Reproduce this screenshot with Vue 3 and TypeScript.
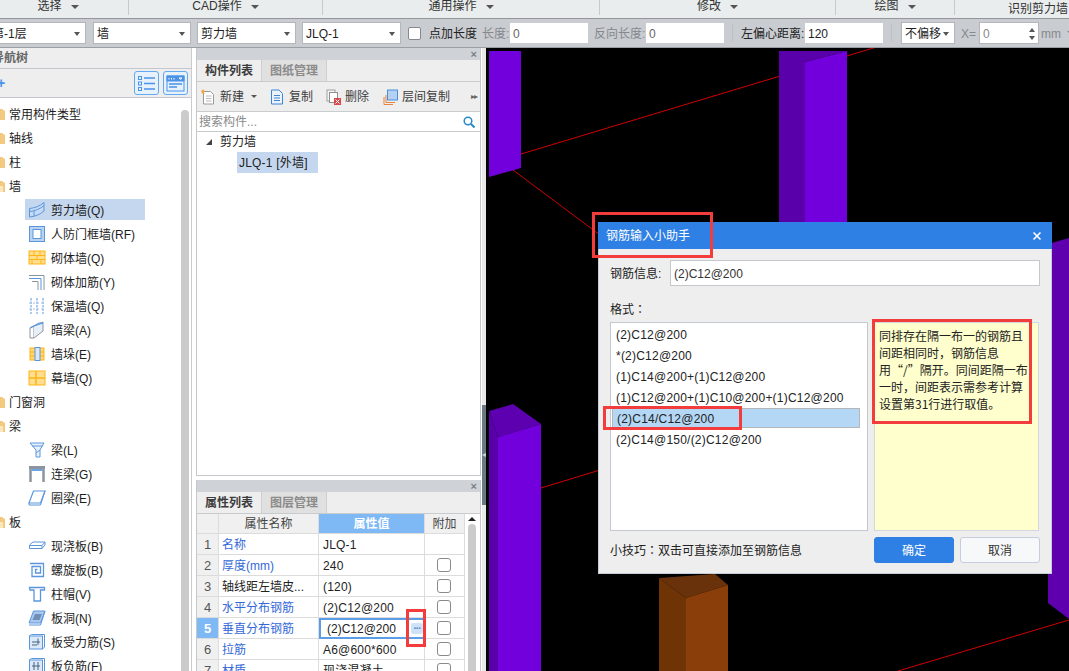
<template>
  <div class="app">
    <div class="ribbon">
      <div v-for="s in ribbon" :key="s.label" class="rib-sec" :class="s.cls">
        <span>{{ s.label }}</span><i class="caret"></i>
      </div>
      <div class="rib-last">识别剪力墙</div>
    </div>

    <div class="toolbar">
      <div class="sel first"><span>第-1层</span><i class="caret"></i></div>
      <div class="sel w98"><span>墙</span><i class="caret"></i></div>
      <div class="sel w99"><span>剪力墙</span><i class="caret"></i></div>
      <div class="sel w99"><span>JLQ-1</span><i class="caret"></i></div>
      <span class="tb-check"></span>
      <span class="tb-label l-point">点加长度</span>
      <span class="tb-label off l-len">长度:</span>
      <input class="tb-input" value="0" readonly />
      <span class="tb-label off l-back">反向长度:</span>
      <input class="tb-input" value="0" readonly />
      <i class="tb-sep"></i>
      <span class="tb-label l-offset">左偏心距离:</span>
      <input class="tb-input" value="120" readonly />
      <i class="tb-sep"></i>
      <div class="sel w54"><span>不偏移</span><i class="caret"></i></div>
      <span class="tb-label off l-x">X=</span>
      <div class="spin">
        <span>0</span>
        <div class="spin-btns"><i class="up"></i><i class="down"></i></div>
      </div>
      <span class="tb-label off l-mm">mm</span>
      <i class="caret tb-tail"></i>
    </div>

    <div class="main">
      <aside class="nav">
        <div class="nav-head"><span>导航树</span></div>
        <div class="nav-tools">
          <span class="plus">+</span>
          <button class="view-btn">
            <svg width="19" height="17" viewBox="0 0 19 17" fill="none" stroke="#4a93e6">
              <rect x="1.5" y="1.5" width="3" height="3" /><rect x="1.5" y="7" width="3" height="3" /><rect x="1.5" y="12.5" width="3" height="3" />
              <path d="M7 3h11M7 8.5h11M7 14h11" stroke-width="1.3" />
            </svg>
          </button>
          <button class="view-btn">
            <svg width="19" height="17" viewBox="0 0 19 17" fill="none" stroke="#4a93e6">
              <rect x="1" y="1" width="17" height="15" />
              <path d="M1 1h17v5H1z" fill="#4a93e6" />
              <path d="M3 3v1.5M5.5 3v1.5M8 3v1.5M13 3h3l-1.500 1.500z" stroke="#fff" />
              <path d="M3 9h13M3 12h8" stroke-width="1.300" />
            </svg>
          </button>
        </div>
        <div class="nav-body">
          <ul class="tree">
            <li v-for="n in navTree" :key="n.label" class="tree-row" :class="{ item: n.icon, active: n.active }">
              <svg v-if="n.icon" class="tree-ico" viewBox="0 0 18 18" fill="none" v-html="icons[n.icon]"></svg>
              <svg v-else class="folder" viewBox="0 0 5 12">
                <path d="M0 1h2.500l1 1.500H5V12H0z" fill="#f2c97e" />
                <path v-if="n.open" d="M0 6h3v6H0z" fill="#fbe7bd" />
              </svg>
              <span>{{ n.label }}</span>
            </li>
          </ul>
          <div class="nav-scroll"><i></i></div>
        </div>
      </aside>

      <div class="mid">
        <section class="panel top-panel">
          <div class="panel-bar"><span>×</span></div>
          <div class="tabs">
            <span class="tab on">构件列表</span>
            <span class="tab">图纸管理</span>
          </div>
          <div class="actions">
            <span class="act act-new">
              <svg width="15" height="16" viewBox="0 0 15 16" fill="none">
                <path d="M3.500 2.500h7l3 3v9.500h-10z" fill="#fff" stroke="#9a9a9a" />
                <path d="M6 7h5.500M6 9.500h5.500M6 12h5.500" stroke="#b8b8b8" />
                <path d="M3 0l.8 1.600L5.500 2 4 3.300l.5 1.700L3 4l-1.500 1 .5-1.700L.5 2l1.700-.4z" fill="#f2a33a" />
              </svg>
              新建
            </span>
            <i class="caret act-caret"></i>
            <span class="act act-copy">
              <svg width="14" height="16" viewBox="0 0 14 16" fill="none" stroke="#3f86d0">
                <path d="M1.500 1h7.500l3.500 3.500V15h-11z" fill="#eaf3fb" />
                <path d="M4 6.500h6M4 9h6M4 11.500h6" />
              </svg>
              复制
            </span>
            <span class="act act-del">
              <svg width="16" height="16" viewBox="0 0 16 16" fill="none">
                <rect x="1" y="1" width="8" height="11" stroke="#a0a0a0" fill="#f5f5f5" />
                <rect x="3.500" y="3.500" width="8" height="10" stroke="#909090" fill="#fff" />
                <rect x="8" y="9" width="7" height="7" fill="#d8484a" />
                <path d="M9.500 10.500l4 4M13.500 10.500l-4 4" stroke="#fff" />
              </svg>
              删除
            </span>
            <span class="act act-floor">
              <svg width="15" height="16" viewBox="0 0 15 16" fill="none">
                <path d="M3 6v7.500h9" stroke="#e8833a" />
                <path d="M1 8v7.500h9" stroke="#e8833a" />
                <rect x="4.500" y="1" width="10" height="10" fill="#b4d0f2" stroke="#4a8fdc" />
              </svg>
              层间复制
            </span>
            <span class="more">▸▸</span>
          </div>
          <div class="search">
            <span>搜索构件...</span>
            <svg width="12" height="12" viewBox="0 0 12 12" fill="none" stroke="#2a8ac8" stroke-width="1.500">
              <circle cx="5" cy="5" r="3.800" /><path d="M8 8l3.500 3.500" stroke-width="2" />
            </svg>
          </div>
          <div class="comp-tree">
            <div class="comp-root"><i class="tri"></i>剪力墙</div>
            <div class="comp-leaf">JLQ-1 [外墙]</div>
          </div>
        </section>

        <section class="panel bottom-panel">
          <div class="panel-bar low"><span>×</span></div>
          <div class="tabs">
            <span class="tab on">属性列表</span>
            <span class="tab">图层管理</span>
          </div>
          <div class="prop-wrap">
            <div class="prop-grid">
              <div class="ph"></div>
              <div class="ph">属性名称</div>
              <div class="ph hot">属性值</div>
              <div class="ph">附加</div>
              <template v-for="(r, i) in props" :key="r.name">
                <div class="pc num" :class="{ cur: r.current }">{{ i + 1 }}</div>
                <div class="pc name" :class="{ blue: r.blue }">{{ r.name }}</div>
                <div class="pc val" :class="{ editing: r.current }">
                  <span>{{ r.value }}</span>
                  <b v-if="r.current" class="dots">···</b>
                </div>
                <div class="pc chk"><i v-if="r.check"></i></div>
              </template>
            </div>
            <div class="prop-scroll"><em></em><i></i></div>
            <div class="mark mark-dots"></div>
          </div>
        </section>
      </div>

      <div class="split"><i>◂</i></div>

      <div class="canvas">
        <svg class="scene" viewBox="486 48 583 623" width="583" height="623">
          <g stroke="#d00000" stroke-width="1" fill="none">
            <path d="M521 154L890 43" />
            <path d="M513 170L600 235" />
            <path d="M541 488L600 470" />
            <path d="M898 671L1069 620" />
          </g>
          <path d="M489 51h32v117l-32 9z" fill="#7200dd" />
          <path d="M779 51h26v180h-26z" fill="#5a00ab" />
          <path d="M805 62L847 51v180h-42z" fill="#7200dd" />
          <path d="M805 51h42l-42 11z" fill="#5a00ab" />
          <path d="M489 411l24-7 28 20-43 13z" fill="#5d00b0" />
          <path d="M489 411l9 26v234h-9z" fill="#5a00ab" />
          <path d="M498 437l43-13v247h-43z" fill="#7200dd" />
          <path d="M659 578l56-4 13 11-42 13z" fill="#69320a" />
          <path d="M659 578l27 20v73h-27z" fill="#6f3406" />
          <path d="M686 598l42-13v86h-42z" fill="#8a3f0a" />
          <path d="M1048 244l21-6v381l-21-16z" fill="#5f00af" />
        </svg>

        <div class="dialog">
          <div class="dlg-title">
            <span>钢筋输入小助手</span>
            <svg width="10" height="10" viewBox="0 0 10 10" stroke="#fff" stroke-width="1.600">
              <path d="M1.500 1.500l7 7M8.500 1.500l-7 7" />
            </svg>
          </div>
          <div class="dlg-body">
            <div class="info-row">
              <label>钢筋信息:</label>
              <input value="(2)C12@200" readonly />
            </div>
            <div class="fmt-label">格式<span class="tc">：</span></div>
            <div class="fmt-row">
              <ul class="fmt-list">
                <li v-for="f in formats" :key="f" :class="{ sel: f === selectedFormat }">{{ f }}</li>
              </ul>
              <div class="fmt-help">
                <span v-for="l in helpLines" :key="l">{{ l }}</span>
              </div>
            </div>
            <div class="dlg-foot">
              <span>小技巧<span class="tc">：</span>双击可直接添加至钢筋信息</span>
              <div class="btns">
                <button class="ok">确定</button>
                <button class="cancel">取消</button>
              </div>
            </div>
          </div>
          <div class="mark mark-title"></div>
          <div class="mark mark-sel"></div>
          <div class="mark mark-help"></div>
        </div>
      </div>
    </div>
  </div>
</template>

<script setup lang="ts">
interface RibbonSection {
  label: string
  cls: string
}

interface NavNode {
  label: string
  icon?: string
  open?: boolean
  active?: boolean
}

interface PropRow {
  name: string
  value: string
  blue: boolean
  check: boolean
  current?: boolean
}

const ribbon: RibbonSection[] = [
  { label: '选择', cls: 'r1' },
  { label: 'CAD操作', cls: 'r2' },
  { label: '通用操作', cls: 'r3' },
  { label: '修改', cls: 'r4' },
  { label: '绘图', cls: 'r5' }
]

const navTree: NavNode[] = [
  { label: '常用构件类型' },
  { label: '轴线' },
  { label: '柱' },
  { label: '墙', open: true },
  { label: '剪力墙(Q)', icon: 'wall', active: true },
  { label: '人防门框墙(RF)', icon: 'door' },
  { label: '砌体墙(Q)', icon: 'brick' },
  { label: '砌体加筋(Y)', icon: 'rebar' },
  { label: '保温墙(Q)', icon: 'insul' },
  { label: '暗梁(A)', icon: 'hidden' },
  { label: '墙垛(E)', icon: 'pier' },
  { label: '幕墙(Q)', icon: 'curtain' },
  { label: '门窗洞' },
  { label: '梁', open: true },
  { label: '梁(L)', icon: 'beam' },
  { label: '连梁(G)', icon: 'link' },
  { label: '圈梁(E)', icon: 'ring' },
  { label: '板', open: true },
  { label: '现浇板(B)', icon: 'slab' },
  { label: '螺旋板(B)', icon: 'spiral' },
  { label: '柱帽(V)', icon: 'cap' },
  { label: '板洞(N)', icon: 'hole' },
  { label: '板受力筋(S)', icon: 'bar1' },
  { label: '板负筋(F)', icon: 'bar2' }
]

const B = 'stroke="#5b96dc"'
const O = 'stroke="#fdb515"'

const icons: Record<string, string> = {
  wall: `<path d="M1.500 7.500C7 7 12 5 16 1.500V10c-4 3.500-9 5.500-14.500 6z" fill="#c5dbf5" ${B}/><path d="M1.500 10.500C7 10 12 8 16 4.500M6 10v5.500" ${B}/>`,
  door: `<rect x="1.500" y="1.500" width="15" height="15" fill="#b9d2f0" ${B}/><rect x="5" y="4.500" width="8" height="9" fill="#fff" ${B}/>`,
  brick: `<rect x="1" y="2" width="16" height="13" fill="#ffdf8f" ${O}/><path d="M1 6.500h16M1 10.500h16M6 2v4.500M12 2v4.500M9 6.500v4M4 10.500v4.500M13 10.500v4.500" ${O}/>`,
  rebar: `<path d="M1 2.500h15V17" stroke="#8c959e"/><path d="M1 5.500h12V17" stroke="#5b96dc"/><path d="M4 8.500h6V17" stroke="#8c959e"/>`,
  insul: `<path d="M3 1v16M9 1v16M15 1v16" stroke="#5b96dc" stroke-dasharray="2.500 1"/><path d="M1 6h16M1 12h16" stroke="#a8c4e8" stroke-dasharray="2 2"/>`,
  hidden: `<path d="M2 7l4-2v12H2z" fill="#fff" stroke="#8c959e"/><path d="M6 5l9-4v9l-9 7" fill="#e6eef8" stroke="#8c959e"/><path d="M2 7l9-5h4L6 5z" fill="#b9d2f0" ${B}/>`,
  pier: `<rect x="2" y="3" width="14" height="12" fill="#ffd777" ${O}/><path d="M2 7h14M2 11h14" ${O}/><rect x="7" y="2.500" width="5" height="13" fill="#dbe8f8" ${B}/>`,
  curtain: `<rect x="1" y="2" width="16" height="14" fill="#ffdf8f" ${O}/><path d="M1 9h16M8 2v14" ${O} stroke-width="1.500"/>`,
  beam: `<path d="M2 2h14l-4 7v7H8V9z" fill="#e9f1fb" ${B}/><path d="M4 5h10M8 12l4-3" ${B}/>`,
  link: `<path d="M2.500 17V4M15.500 17V4" stroke="#8c959e" stroke-width="2.500"/><rect x="1.500" y="1.500" width="15" height="2" fill="#8c959e" stroke="#8c959e"/><rect x="3.500" y="4" width="11" height="2" fill="#6ea2e2"/>`,
  ring: `<path d="M5.500 2H17l-4.500 12H1z" fill="#fff" ${B} stroke-width="1.200"/><path d="M1 16h11.500l4.500-14M1 14v2" ${B}/>`,
  slab: `<path d="M1.500 8L5 5h12v3l-3 3.500H1.500z" fill="#fff" ${B}/><path d="M1.500 8.500H14l3-3.500M14 8.500v3" ${B}/>`,
  spiral: `<path d="M2 2.500h13.500V15.500H4V5.500h8.500V12H7.500V8.500h2" ${B} stroke-width="1.300"/>`,
  cap: `<path d="M1.500 2.500h15v2.500h-4v11H6V5H2z" fill="#fff" ${B} stroke-width="1.300"/>`,
  hole: `<path d="M5.500 2H17l-4.500 12H1z" fill="#aac8ee" ${B}/><path d="M7 5h7l-2.500 6h-7z" fill="#6f8fb8"/><path d="M1 16h11.500l4.500-14" ${B}/>`,
  bar1: `<rect x="1.500" y="3" width="13" height="13" fill="#dce9f9" ${B}/><path d="M1.500 3l2-1.500h13v12.500l-2 2" ${B}/><path d="M4 9h8M10 5.500V12M4 12h5" stroke="#46627f"/>`,
  bar2: `<rect x="1.500" y="3" width="13" height="13" fill="#dce9f9" ${B}/><path d="M1.500 3l2-1.500h13v12.500l-2 2" ${B}/><path d="M6 5v8M10 5v8M4 9h8" stroke="#46627f"/>`
}

const props: PropRow[] = [
  { name: '名称', value: 'JLQ-1', blue: true, check: false },
  { name: '厚度(mm)', value: '240', blue: true, check: true },
  { name: '轴线距左墙皮...', value: '(120)', blue: false, check: true },
  { name: '水平分布钢筋', value: '(2)C12@200', blue: true, check: true },
  { name: '垂直分布钢筋', value: '(2)C12@200', blue: true, check: true, current: true },
  { name: '拉筋', value: 'A6@600*600', blue: true, check: true },
  { name: '材质', value: '现浇混凝土', blue: true, check: true }
]

const formats: string[] = [
  '(2)C12@200',
  '*(2)C12@200',
  '(1)C14@200+(1)C12@200',
  '(1)C12@200+(1)C10@200+(1)C12@200',
  '(2)C14/C12@200',
  '(2)C14@150/(2)C12@200'
]
const selectedFormat = '(2)C14/C12@200'

const helpLines: string[] = [
  '同排存在隔一布一的钢筋且',
  '间距相同时，钢筋信息',
  '用“/”隔开。同间距隔一布',
  '一时，间距表示需参考计算',
  '设置第31行进行取值。'
]
</script>

<style>
html,
body {
  margin: 0;
  overflow: hidden;
}
</style>

<style scoped>
.app {
  width: 1069px;
  height: 671px;
  overflow: hidden;
  display: flex;
  flex-direction: column;
  background: #fff;
  color: #222;
  font: 12px/16px "Liberation Sans", "Noto Sans CJK SC", sans-serif;
}

.caret {
  display: inline-block;
  width: 0;
  height: 0;
  border-left: 4px solid transparent;
  border-right: 4px solid transparent;
  border-top: 4px solid #555;
}

.tc {
  font-family: "Noto Sans CJK TC", sans-serif;
}

/* ribbon */
.ribbon {
  height: 18px;
  flex: none;
  display: flex;
  margin-left: -12px;
  background: #e9eded;
  border-bottom: 1px solid #93979b;
}
.rib-sec {
  height: 15px;
  flex: none;
  box-sizing: border-box;
  display: flex;
  justify-content: center;
  gap: 9px;
  border-right: 1px solid #c6cbcb;
  overflow: hidden;
  color: #333;
}
.rib-sec span {
  margin-top: -2px;
}
.rib-sec .caret {
  margin-top: 5px;
}
.r1 { width: 141px; }
.r2 { width: 194px; }
.r3 { width: 277px; }
.r4 { width: 236px; }
.r5 { width: 119px; }
.rib-last {
  flex: none;
  margin-left: 53px;
  padding-top: 1px;
  white-space: nowrap;
  color: #333;
}

/* toolbar */
.toolbar {
  height: 28px;
  flex: none;
  display: flex;
  align-items: center;
  background: #c9ccd1;
  border-bottom: 1px solid #9b9ea3;
  white-space: nowrap;
}
.toolbar > * {
  flex: none;
}
.sel {
  height: 22px;
  box-sizing: border-box;
  display: flex;
  align-items: center;
  justify-content: space-between;
  padding: 1px 3px 0;
  background: #fff;
  border: 1px solid #b4b6ba;
  margin-right: 6px;
  color: #222;
}
.sel .caret {
  margin-right: 2px;
  border-left-width: 3px;
  border-right-width: 3px;
}
.first {
  width: 98px;
  margin-left: -12px;
  margin-right: 7px;
}
.w98 { width: 98px; }
.w99 { width: 99px; }
.w54 {
  width: 54px;
  margin: 0 0 0 1px;
}
.tb-check {
  width: 13px;
  height: 13px;
  box-sizing: border-box;
  margin-left: 1px;
  border: 1px solid #85888c;
  border-radius: 2px;
  background: #fff;
}
.tb-label {
  padding-top: 1px;
  color: #222;
}
.off {
  color: #85888c;
}
.l-point { margin-left: 8px; width: 48px; }
.l-len { margin-left: 5px; width: 28px; }
.l-back { margin-left: 6px; width: 52px; }
.l-offset { width: 64px; }
.l-x { margin-left: 6px; width: 18px; }
.l-mm { margin-left: 2px; }
.tb-tail {
  margin-left: 6px;
  border-top-color: #85888c;
}
.tb-input {
  width: 78px;
  height: 20px;
  box-sizing: border-box;
  padding: 1px 3px 0;
  border: none;
  outline: none;
  background: #fff;
  color: #222;
  font: inherit;
}
.off + .tb-input {
  color: #666;
}
.tb-sep {
  width: 1px;
  height: 18px;
  margin: 0 8px;
  background: #bcbfc4;
}
.spin {
  width: 60px;
  height: 22px;
  box-sizing: border-box;
  display: flex;
  align-items: center;
  justify-content: space-between;
  padding: 1px 3px 0;
  background: #fff;
  border: 1px solid #b4b6ba;
  color: #888;
}
.spin-btns {
  display: flex;
  flex-direction: column;
  gap: 4px;
}
.spin-btns i {
  width: 0;
  height: 0;
  border-left: 3px solid transparent;
  border-right: 3px solid transparent;
}
.spin-btns .up {
  border-bottom: 4px solid #555;
}
.spin-btns .down {
  border-top: 4px solid #555;
}

/* layout */
.main {
  flex: 1;
  min-height: 0;
  display: flex;
}

/* nav */
.nav {
  width: 191px;
  flex: none;
  display: flex;
  flex-direction: column;
  border-right: 1px solid #c8cbcf;
  overflow: hidden;
}
.nav-head {
  height: 20px;
  flex: none;
  background: #eeeeee;
  border-bottom: 1px solid #c4c8cd;
  color: #666;
  font-weight: 700;
  line-height: 21px;
}
.nav-head span {
  margin-left: -8px;
  display: block;
}
.nav-tools {
  height: 28px;
  flex: none;
  display: flex;
  align-items: center;
  gap: 4px;
  padding-right: 3px;
  background: #eeeeee;
  border-bottom: 1px solid #c4c8cd;
}
.plus {
  margin-left: -3px;
  margin-right: auto;
  color: #4a93e6;
  font-size: 14px;
  font-weight: 700;
}
.view-btn {
  width: 25px;
  height: 24px;
  box-sizing: border-box;
  padding: 0;
  display: flex;
  align-items: center;
  justify-content: center;
  background: #e6f1fc;
  border: 1px solid #62a9f0;
  border-radius: 3px;
}
.nav-body {
  flex: 1;
  min-height: 0;
  display: flex;
  background: #fff;
}
.tree {
  flex: 1;
  min-width: 0;
  margin: 0;
  padding: 2px 0 0;
  list-style: none;
  overflow: hidden;
}
.tree-row {
  height: 21px;
  margin-top: 3px;
  display: flex;
  align-items: center;
  gap: 4px;
  color: #1c1c1c;
  white-space: nowrap;
}
.tree-row span {
  padding-top: 2px;
}
.tree-row.item {
  margin-left: 25px;
  padding-left: 3px;
  width: 117px;
  gap: 5px;
}
.tree-row.active {
  background: #c5d7ee;
}
.folder {
  width: 5px;
  height: 12px;
  flex: none;
}
.tree-ico {
  width: 18px;
  height: 18px;
  flex: none;
}
.nav-scroll {
  width: 8px;
  flex: none;
  margin: 0 2px 0 0;
  padding-top: 12px;
  display: flex;
}
.nav-scroll i {
  flex: 1;
  background: #cbcbcb;
  border-radius: 4px 4px 0 0;
}

/* middle panels */
.mid {
  width: 285px;
  flex: none;
  margin-left: 4px;
  display: flex;
  flex-direction: column;
  gap: 4px;
}
.panel {
  display: flex;
  flex-direction: column;
  overflow: hidden;
  border-left: 1px solid #c4c8cd;
  border-right: 1px solid #c4c8cd;
}
.top-panel {
  height: 428px;
  flex: none;
  border-bottom: 1px solid #c4c8cd;
  box-sizing: border-box;
}
.bottom-panel {
  flex: 1;
  min-height: 0;
}
.panel-bar {
  height: 12px;
  flex: none;
  display: flex;
  justify-content: flex-end;
  padding-right: 3px;
  background: #cfd2d6;
  color: #7b7f84;
  font-size: 11px;
  font-weight: 700;
  line-height: 12px;
}
.tabs {
  height: 21px;
  flex: none;
  display: flex;
  background: #eeeeee;
  border-bottom: 1px solid #c9cccf;
}
.tab {
  width: 64px;
  text-align: center;
  line-height: 23px;
  background: #e0e0e0;
  color: #8b8b8b;
  font-weight: 700;
  border-right: 1px solid #cfcfcf;
}
.tab.on {
  background: #eeeeee;
  color: #3c3c3c;
}
.actions {
  height: 29px;
  flex: none;
  display: flex;
  align-items: center;
  background: #eeeeee;
  border-bottom: 1px solid #c9cccf;
  color: #3c3c3c;
  white-space: nowrap;
}
.act {
  display: flex;
  align-items: center;
  gap: 5px;
}
.act-new { margin-left: 3px; }
.act-caret {
  margin-left: 7px;
  border-left-width: 3px;
  border-right-width: 3px;
  border-top-width: 3px;
}
.act-copy { margin-left: 13px; }
.act-del { margin-left: 13px; gap: 3px; }
.act-floor { margin-left: 14px; gap: 4px; }
.more {
  margin-left: auto;
  margin-right: 3px;
  color: #666;
  font-size: 8px;
  letter-spacing: -1px;
}
.search {
  height: 18px;
  flex: none;
  display: flex;
  align-items: center;
  justify-content: space-between;
  padding: 1px 5px 0 2px;
  box-sizing: content-box;
  background: #fff;
  border-bottom: 1px solid #c9cccf;
  color: #8a8a8a;
}
.comp-tree {
  flex: 1;
  background: #fff;
  color: #222;
}
.comp-root {
  height: 20px;
  display: flex;
  align-items: center;
  padding-left: 9px;
  gap: 8px;
}
.tri {
  width: 0;
  height: 0;
  border-left: 6px solid transparent;
  border-bottom: 6px solid #444;
}
.comp-leaf {
  width: 81px;
  height: 21px;
  box-sizing: border-box;
  margin-left: 40px;
  padding-left: 2px;
  line-height: 22px;
  letter-spacing: 0.2px;
  background: #c5d7ee;
  white-space: nowrap;
}

/* property table */
.prop-wrap {
  position: relative;
  flex: 1;
  min-height: 0;
  display: flex;
  background: #fff;
  overflow: hidden;
}
.prop-grid {
  display: grid;
  grid-template-columns: 22px 100px 106px 40px;
  grid-template-rows: 20px repeat(7, 21px);
  align-content: start;
}
.ph,
.pc {
  box-sizing: border-box;
  display: flex;
  align-items: center;
  padding-top: 1px;
  border-right: 1px solid #dcdcdc;
  border-bottom: 1px solid #dcdcdc;
  white-space: nowrap;
}
.ph {
  justify-content: center;
  background: #f0f0f0;
  color: #444;
}
.ph.hot {
  background: #7eb8f5;
  color: #fff;
  font-weight: 700;
}
.num {
  justify-content: center;
  background: #f0f0f0;
  color: #555;
  font-size: 13px;
}
.num.cur {
  background: #7eb8f5;
  color: #fff;
  font-weight: 700;
}
.name {
  padding-left: 3px;
}
.name.blue {
  color: #3468d8;
}
.val {
  padding-left: 4px;
  justify-content: space-between;
  letter-spacing: 0.2px;
}
.val.editing {
  padding: 0 1px 0 6px;
  border: 2px solid #5a9ee8;
  border-right-width: 1px;
}
.val.editing span {
  letter-spacing: 0;
}
.dots {
  width: 12px;
  height: 11px;
  display: flex;
  align-items: center;
  justify-content: center;
  background: #cfe3f8;
  border-radius: 2px;
  color: #4f86c6;
  font-size: 10px;
  letter-spacing: -1px;
}
.chk {
  justify-content: center;
  padding: 0 2px 0 0;
}
.chk i {
  width: 14px;
  height: 14px;
  box-sizing: border-box;
  border: 1px solid #8a8a8a;
  border-radius: 3px;
}
.prop-scroll {
  width: 14px;
  flex: none;
  display: flex;
  flex-direction: column;
  align-items: center;
  padding-top: 3px;
}
.prop-scroll em {
  width: 0;
  height: 0;
  border-left: 4px solid transparent;
  border-right: 4px solid transparent;
  border-bottom: 4px solid #222;
}
.prop-scroll i {
  flex: 1;
  width: 8px;
  margin-top: 3px;
  background: #cbcbcb;
  border-radius: 4px 4px 0 0;
}

/* splitter */
.split {
  width: 4px;
  flex: none;
  margin-left: 1px;
  background: #e9e9e9;
}
.split i {
  display: flex;
  align-items: center;
  justify-content: center;
  height: 100px;
  margin-top: 357px;
  background: #6c7a84;
  color: #cfd3d6;
  font-size: 8px;
  font-style: normal;
}

/* canvas */
.canvas {
  position: relative;
  flex: 1;
  min-width: 0;
  background: #000;
  overflow: hidden;
}
.scene {
  display: block;
}

/* dialog */
.dialog {
  position: absolute;
  left: 112px;
  top: 174px;
  width: 454px;
  height: 352px;
  display: flex;
  flex-direction: column;
}
.dlg-title {
  height: 27px;
  flex: none;
  display: flex;
  align-items: center;
  justify-content: space-between;
  padding: 1px 10px 0 8px;
  box-sizing: border-box;
  background: #2f80e4;
  color: #fff;
}
.dlg-body {
  flex: 1;
  min-height: 0;
  box-sizing: border-box;
  padding: 11px 11px 0;
  display: flex;
  flex-direction: column;
  background: #eeeeee;
  border: 1px solid #c4ccd8;
  border-top: none;
  color: #222;
}
.info-row {
  height: 26px;
  flex: none;
  display: flex;
  align-items: center;
  justify-content: space-between;
}
.info-row label {
  padding-top: 1px;
}
.info-row input {
  width: 370px;
  height: 26px;
  box-sizing: border-box;
  padding: 1px 3px 0;
  background: #fff;
  border: 1px solid #c4c8cc;
  outline: none;
  color: #333;
  font: inherit;
}
.fmt-label {
  height: 20px;
  margin-top: 12px;
  line-height: 22px;
  flex: none;
}
.fmt-row {
  height: 209px;
  flex: none;
  margin-top: 4px;
  display: flex;
  gap: 6px;
}
.fmt-list {
  width: 258px;
  box-sizing: border-box;
  margin: 0;
  padding: 1px;
  list-style: none;
  background: #fff;
  border: 1px solid #c4c8d0;
}
.fmt-list li {
  height: 21px;
  padding-left: 4px;
  line-height: 22px;
  letter-spacing: 0.22px;
  white-space: nowrap;
}
.fmt-list li.sel {
  height: 20px;
  margin-bottom: 1px;
  background: #b3d7f5;
}
.fmt-help {
  width: 165px;
  box-sizing: border-box;
  padding: 4px 0 0 4px;
  background: #ffffcd;
  border: 1px solid #d3d8e0;
  font-family: "Noto Sans CJK SC", sans-serif;
  line-height: 17px;
}
.fmt-help span {
  display: block;
  white-space: nowrap;
}
.dlg-foot {
  margin-top: 6px;
  display: flex;
  align-items: center;
  justify-content: space-between;
}
.dlg-foot > span {
  padding-top: 1px;
}
.btns {
  display: flex;
  gap: 6px;
}
.btns button {
  width: 80px;
  height: 26px;
  box-sizing: border-box;
  padding: 2px 0 0;
  border-radius: 3px;
  font: inherit;
}
.ok {
  background: #2f80e4;
  border: 1px solid #2f80e4;
  color: #fff;
}
.cancel {
  background: #f7f8fa;
  border: 1px solid #c4cce0;
  color: #333;
}

/* red review marks */
.mark {
  position: absolute;
  box-sizing: border-box;
  border: 3px solid #f33c3c;
}
.mark-title {
  left: -6px;
  top: -10px;
  width: 121px;
  height: 46px;
}
.mark-sel {
  left: 5px;
  top: 184px;
  width: 139px;
  height: 24px;
}
.mark-help {
  left: 274px;
  top: 97px;
  width: 160px;
  height: 105px;
}
.mark-dots {
  left: 209px;
  top: 95px;
  width: 20px;
  height: 38px;
}
</style>
